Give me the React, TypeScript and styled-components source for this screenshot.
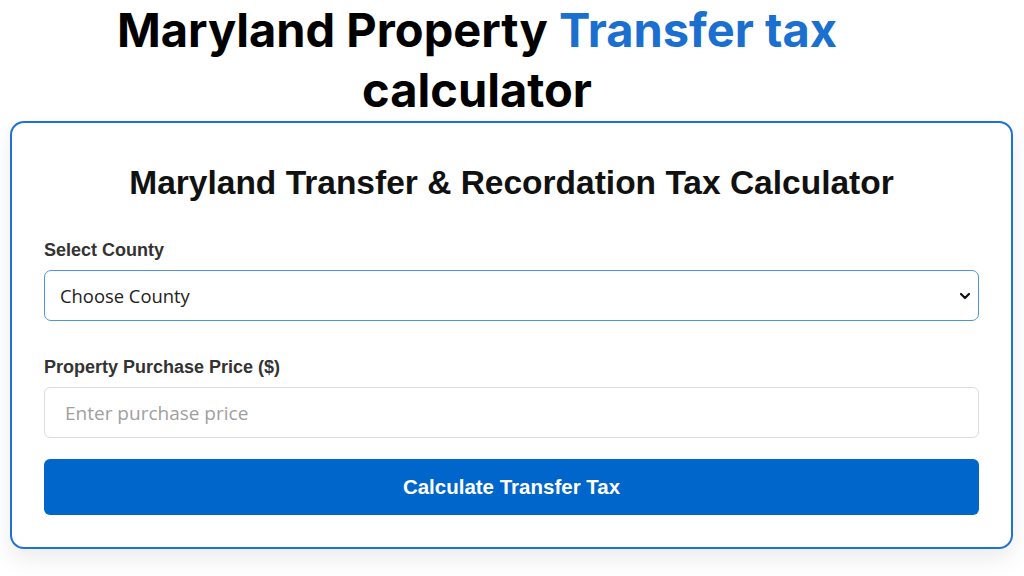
import styled, { createGlobalStyle } from 'styled-components'

const GlobalStyle = createGlobalStyle`
  body {
    margin: 0;
    background: #ffffff;
    font-family: 'Liberation Sans', Arial, sans-serif;
  }
`

const Page = styled.div`
  width: 1024px;
  height: 576px;
  overflow: hidden;
  display: flex;
  flex-direction: column;
`

const PageTitle = styled.h1`
  width: 954px;
  margin: 0;
  text-align: center;
  font-family: Inter, Roboto, sans-serif;
  font-weight: 700;
  font-size: 47px;
  line-height: 60px;
  color: #000;
`

const Accent = styled.span`
  color: #1a6fcf;
`

const Card = styled.div`
  margin: 1px 11px 0 10px;
  border: 2px solid #1f72d4;
  border-radius: 14px;
  background: #fff;
  padding: 32px 32px 32px;
  box-shadow: 0 10px 22px rgba(0, 0, 0, 0.08);
  display: flex;
  flex-direction: column;
`

const CardTitle = styled.h2`
  margin: 9px 0 38px;
  text-align: center;
  font-family: 'Liberation Sans', Arial, sans-serif;
  font-weight: 700;
  font-size: 33.5px;
  line-height: 38px;
  color: #111;
`

const Field = styled.div<{ gap?: number }>`
  display: flex;
  flex-direction: column;
  margin-bottom: ${(p) => p.gap ?? 0}px;
`

const Label = styled.label`
  font-family: 'Liberation Sans', Arial, sans-serif;
  font-weight: 700;
  font-size: 18px;
  line-height: 21px;
  color: #333;
  margin-bottom: 9px;
`

const SelectWrap = styled.div`
  position: relative;
`

const Select = styled.select`
  appearance: none;
  width: 100%;
  height: 51px;
  box-sizing: border-box;
  border: 1.5px solid #5193dc;
  border-radius: 7px;
  background: #fff;
  padding: 0 15px;
  font-family: 'Open Sans', 'Noto Sans', sans-serif;
  font-size: 18.4px;
  color: #222;
  outline: none;
`

const Chevron = styled.svg`
  position: absolute;
  right: 7px;
  top: 50%;
  transform: translateY(-50%);
  pointer-events: none;
`

const Input = styled.input`
  width: 100%;
  height: 51px;
  box-sizing: border-box;
  border: 1px solid #dcdcdc;
  border-radius: 6px;
  padding: 0 20px;
  font-family: 'Open Sans', 'Noto Sans', sans-serif;
  font-size: 19px;
  outline: none;

  &::placeholder {
    color: #a0a0a0;
  }
`

const Button = styled.button`
  margin-top: 21px;
  height: 56px;
  border: none;
  border-radius: 6px;
  background: #0066cc;
  color: #fff;
  font-family: 'Liberation Sans', Arial, sans-serif;
  font-weight: 700;
  font-size: 20.5px;
  cursor: pointer;
`

const App = () => (
  <Page>
    <GlobalStyle />
    <PageTitle>
      Maryland Property <Accent>Transfer tax</Accent>
      <br />
      calculator
    </PageTitle>
    <Card>
      <CardTitle>Maryland Transfer &amp; Recordation Tax Calculator</CardTitle>
      <Field gap={36}>
        <Label>Select County</Label>
        <SelectWrap>
          <Select defaultValue="">
            <option value="">Choose County</option>
          </Select>
          <Chevron width="14" height="14" viewBox="0 0 14 14">
            <path d="M3 5l4 4 4-4" fill="none" stroke="#111" strokeWidth="2.2" strokeLinecap="round" strokeLinejoin="round" />
          </Chevron>
        </SelectWrap>
      </Field>
      <Field>
        <Label>Property Purchase Price ($)</Label>
        <Input placeholder="Enter purchase price" />
      </Field>
      <Button>Calculate Transfer Tax</Button>
    </Card>
  </Page>
)

export default App
